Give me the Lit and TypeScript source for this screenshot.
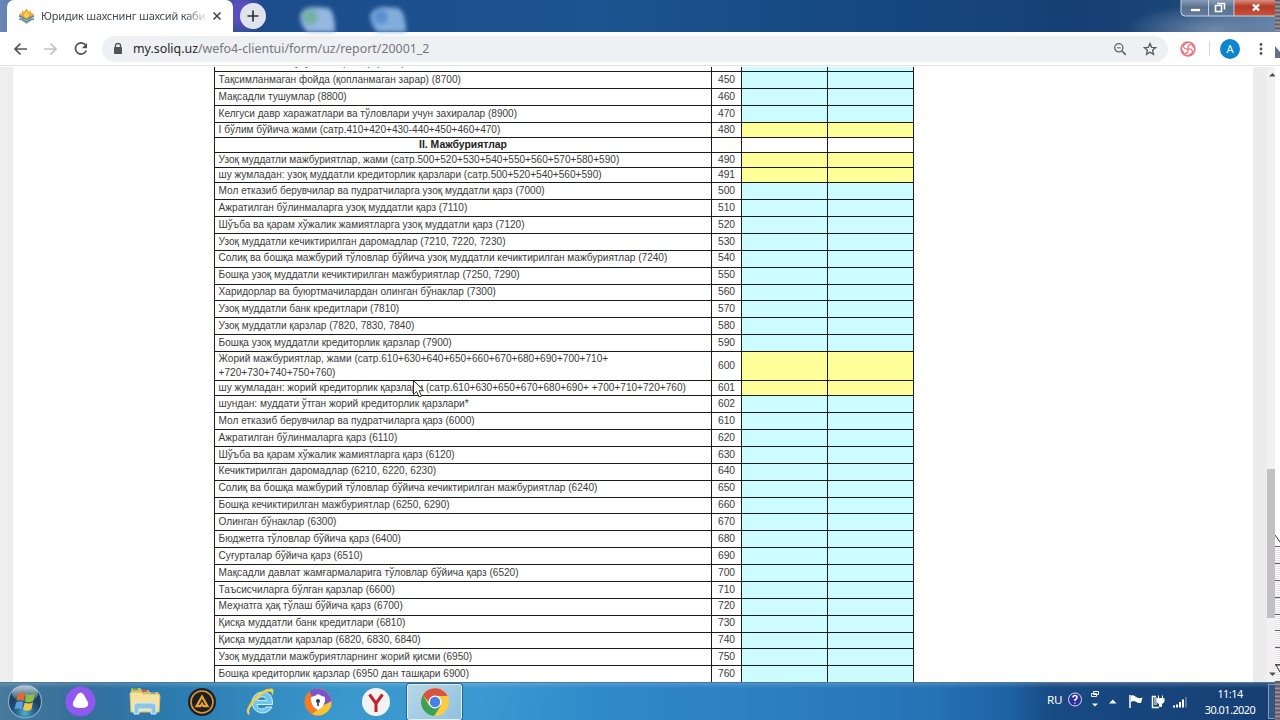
import { LitElement, html, css, svg } from 'lit';
import { customElement } from 'lit/decorators.js';
import { classMap } from 'lit/directives/class-map.js';

type Kind = 'input' | 'total' | 'head' | 'tall';

interface Row {
  text: string;
  code: string;
  kind: Kind;
}

const row = (code: string, text: string, kind: Kind = 'input'): Row => ({ code, text, kind });

const ROWS: Row[] = [
  row('440', 'Сотиб олинган хусусий акциялар (8600)'),
  row('450', 'Тақсимланмаган фойда (қопланмаган зарар) (8700)'),
  row('460', 'Мақсадли тушумлар (8800)'),
  row('470', 'Келгуси давр харажатлари ва тўловлари учун захиралар (8900)'),
  row('480', 'I бўлим бўйича жами (сатр.410+420+430-440+450+460+470)', 'total'),
  row('', 'II. Мажбуриятлар', 'head'),
  row('490', 'Узоқ муддатли мажбуриятлар, жами (сатр.500+520+530+540+550+560+570+580+590)', 'total'),
  row('491', 'шу жумладан: узоқ муддатли кредиторлик қарзлари (сатр.500+520+540+560+590)', 'total'),
  row('500', 'Мол етказиб берувчилар ва пудратчиларга узоқ муддатли қарз (7000)'),
  row('510', 'Ажратилган бўлинмаларга узоқ муддатли қарз (7110)'),
  row('520', 'Шўъба ва қарам хўжалик жамиятларга узоқ муддатли қарз (7120)'),
  row('530', 'Узоқ муддатли кечиктирилган даромадлар (7210, 7220, 7230)'),
  row('540', 'Солиқ ва бошқа мажбурий тўловлар бўйича узоқ муддатли кечиктирилган мажбуриятлар (7240)'),
  row('550', 'Бошқа узоқ муддатли кечиктирилган мажбуриятлар (7250, 7290)'),
  row('560', 'Харидорлар ва буюртмачилардан олинган бўнаклар (7300)'),
  row('570', 'Узоқ муддатли банк кредитлари (7810)'),
  row('580', 'Узоқ муддатли қарзлар (7820, 7830, 7840)'),
  row('590', 'Бошқа узоқ муддатли кредиторлик қарзлар (7900)'),
  row('600', 'Жорий мажбуриятлар, жами (сатр.610+630+640+650+660+670+680+690+700+710+\n+720+730+740+750+760)', 'tall'),
  row('601', 'шу жумладан: жорий кредиторлик қарзлари (сатр.610+630+650+670+680+690+ +700+710+720+760)', 'total'),
  row('602', 'шундан: муддати ўтган жорий кредиторлик қарзлари*'),
  row('610', 'Мол етказиб берувчилар ва пудратчиларга қарз (6000)'),
  row('620', 'Ажратилган бўлинмаларга қарз (6110)'),
  row('630', 'Шўъба ва қарам хўжалик жамиятларга қарз (6120)'),
  row('640', 'Кечиктирилган даромадлар (6210, 6220, 6230)'),
  row('650', 'Солиқ ва бошқа мажбурий тўловлар бўйича кечиктирилган мажбуриятлар (6240)'),
  row('660', 'Бошқа кечиктирилган мажбуриятлар (6250, 6290)'),
  row('670', 'Олинган бўнаклар (6300)'),
  row('680', 'Бюджетга тўловлар бўйича қарз (6400)'),
  row('690', 'Суғурталар бўйича қарз (6510)'),
  row('700', 'Мақсадли давлат жамғармаларига тўловлар бўйича қарз (6520)'),
  row('710', 'Таъсисчиларга бўлган қарзлар (6600)'),
  row('720', 'Меҳнатга ҳақ тўлаш бўйича қарз (6700)'),
  row('730', 'Қисқа муддатли банк кредитлари (6810)'),
  row('740', 'Қисқа муддатли қарзлар (6820, 6830, 6840)'),
  row('750', 'Узоқ муддатли мажбуриятларнинг жорий қисми (6950)'),
  row('760', 'Бошқа кредиторлик қарзлар (6950 дан ташқари 6900)'),
];

@customElement('report-table')
export class ReportTable extends LitElement {
  static styles = css`
    :host {
      display: block;
      width: 700px;
      font: 10.09px/14px 'Liberation Sans', Arial, sans-serif;
      color: #3c3c3c;
    }

    .row {
      display: grid;
      grid-template-columns: 497px 30px 86px 86px;
      height: 16.88px;
      box-sizing: border-box;
      border-top: 1px solid #1c1c1c;
      border-right: 1px solid #1c1c1c;
    }

    .row > div {
      border-left: 1px solid #1c1c1c;
      white-space: pre;
      display: flex;
      align-items: center;
      box-sizing: border-box;
      min-height: 0;
      padding-bottom: 0.6px;
    }

    .row .name { padding-left: 3.6px; }
    .row .code { justify-content: center; font-size: 10.3px; }
    .row.total,
    .row.head { height: 15.07px; }
    .row.tall { height: 29.2px; }
    .row.head .name { justify-content: center; font-size: 10.4px; font-weight: bold; color: #222; padding-left: 0; }
    .cell { background: #ccfcff; }
    .total .cell,
    .tall .cell { background: #ffff99; }
    .head .cell { background: #fff; }
    .end { border-top: 1px solid #1c1c1c; }
  `;

  render() {
    return html`
      ${ROWS.map(
        (r) => html`
          <div class=${classMap({ row: true, [r.kind]: true })}>
            <div class="name">${r.text}</div>
            <div class="code">${r.code}</div>
            <div class="cell"></div>
            <div class="cell"></div>
          </div>
        `
      )}
      <div class="end"></div>
    `;
  }
}

@customElement('browser-top')
export class BrowserTop extends LitElement {
  static styles = css`
    :host {
      display: block;
      height: 67px;
      font-family: 'Noto Sans', 'Open Sans', sans-serif;
      position: relative;
    }

    .strip {
      display: flex;
      height: 32px;
      background:
        radial-gradient(ellipse 24px 26px at 240px 12px, #5a50bd 30%, transparent),
        radial-gradient(ellipse 90px 26px at 1215px 30px, #7189ab, transparent),
        linear-gradient(90deg, #6c87b5 0, #5274af 20px, #1c4c8c 260px, #1b5490 600px, #164880 860px, #153f75 1080px, #1c4778 1190px, #6886ab 1280px);
    }

    .tab {
      display: flex;
      align-items: center;
      width: 226px;
      margin-left: 7px;
      height: 32px;
      background: #fff;
      border-radius: 7px 7px 0 0;
    }

    .logo { margin-left: 11px; }

    .title {
      width: 164px;
      margin-left: 6px;
      white-space: nowrap;
      font-size: 11px;
      line-height: 18px;
      letter-spacing: -0.2px;
      color: #45484c;
      -webkit-mask-image: linear-gradient(90deg, #000 144px, transparent 168px);
      mask-image: linear-gradient(90deg, #000 144px, transparent 168px);
    }

    .cross { margin-left: 7px; }

    .plus {
      width: 26px;
      height: 26px;
      margin: 3px 0 0 7px;
    }

    .ghosts { margin-left: 22px; filter: blur(2px); }

    .bar {
      display: flex;
      align-items: center;
      height: 33px;
      background: #fff;
      border-bottom: 1px solid #e3e3e3;
    }

    .nav { margin-left: 12px; }

    .omni {
      display: flex;
      align-items: center;
      box-sizing: border-box;
      width: 1066px;
      height: 26px;
      margin-left: 8px;
      padding: 0 11px;
      border-radius: 13px;
      background: #eff0f3;
    }

    .url {
      flex: 1;
      margin-left: 10px;
      font-size: 12.4px;
      line-height: 20px;
      color: #75777b;
    }

    .url b { font-weight: normal; color: #27292c; }
    .star { margin-left: 16px; }
    .ext { margin-left: 12px; }
    .sep { width: 1px; height: 15px; background: #d8d8dc; margin-left: 13px; }

    .avatar {
      width: 20px;
      height: 20px;
      margin-left: 10px;
      border-radius: 50%;
      background: #0c84ce;
      color: #fff;
      font-size: 11px;
      line-height: 20px;
      text-align: center;
    }

    .more { margin-left: 19px; }

    .caption {
      position: absolute;
      top: 0;
      right: 4px;
    }
  `;

  render() {
    return html`
      <div class="strip">
        <div class="tab">
          <svg class="logo" width="17" height="16" viewBox="0 0 17 16">
            <path d="M1 8Q1 5 4 5L4 2 6 4 8.500 .5 11 4 13 2 13 5Q16 5 16 8L13 11H4Z" fill="#f2ab35" />
            <circle cx="8.500" cy="7" r="2.500" fill="#f7cf67" />
            <path d="M1 8Q5 9 8.500 12Q12 9 16 8M1 11Q5 11 8.500 14Q12 11 16 11" fill="none" stroke="#5785a8" stroke-width="1.300" />
            <path d="M4 12L8.500 15.500 13 12" fill="none" stroke="#6fa06c" />
          </svg>
          <div class="title">Юридик шахснинг шахсий каби</div>
          <svg class="cross" width="10" height="10" viewBox="0 0 10 10">
            <path d="M1.500 1.500L8.500 8.500M8.500 1.500L1.500 8.500" stroke="#3d4043" stroke-width="1.500" />
          </svg>
        </div>
        <svg class="plus" viewBox="0 0 26 26">
          <circle cx="13" cy="13" r="13" fill="#dfe3ec" />
          <path d="M13 7.500V18.500M7.500 13H18.500" stroke="#2f3236" stroke-width="1.700" />
        </svg>
        <svg class="ghosts" width="130" height="32" viewBox="0 0 130 32">
          <path d="M12 16Q14 7 26 7L40 8Q47 11 47 32H19Q12 24 12 16Z" fill="#95b9e0" />
          <circle cx="22" cy="17" r="8" fill="#75b2a6" />
          <path d="M82 16Q85 7 97 7L110 8Q118 12 118 32H89Q83 24 82 16Z" fill="#82addd" />
          <circle cx="93" cy="17" r="7" fill="#5b8fce" />
        </svg>
      </div>
      <div class="bar">
        <svg class="nav" width="82" height="20" viewBox="0 0 82 20" fill="none" stroke-width="1.700">
          <path d="M15 10H3M8.500 4.500L3 10 8.500 15.500" stroke="#505357" />
          <path d="M32 10H44M38.500 4.500L44 10 38.500 15.500" stroke="#bfc1c4" />
          <path d="M73.500 6A5.600 5.600 0 1 0 74.300 11.500" stroke="#505357" />
          <path d="M75 4V9.200H69.800Z" fill="#505357" />
        </svg>
        <div class="omni">
          <svg width="10" height="14" viewBox="0 0 10 14">
            <path d="M2.500 6V3.500Q2.500 1.500 5 1.500T7.500 3.500V6" fill="none" stroke="#505357" stroke-width="1.300" />
            <rect x="1" y="5" width="8" height="7" rx=".8" fill="#505357" />
          </svg>
          <div class="url"><b>my.soliq.uz</b>/wefo4-clientui/form/uz/report/20001_2</div>
          <svg width="14" height="14" viewBox="0 0 14 14" fill="none" stroke="#606367">
            <circle cx="5.800" cy="5.800" r="4.100" stroke-width="1.300" />
            <path d="M9 9L12.800 12.800" stroke-width="1.700" />
            <path d="M4 5.800H7.600" />
          </svg>
          <svg class="star" width="14" height="14" viewBox="0 0 14 14">
            <path d="M7 1.500L8.600 5.300 12.700 5.600 9.600 8.300 10.500 12.300 7 10.200 3.500 12.300 4.400 8.300 1.300 5.600 5.400 5.300Z" fill="none" stroke="#56595d" stroke-width="1.300" />
          </svg>
        </div>
        <svg class="ext" width="16" height="16" viewBox="0 0 16 16" fill="none" stroke="#e8747c" stroke-width="1.200">
          <circle cx="8" cy="8" r="6.900" stroke-width="1.600" />
          ${[0, 90, 180, 270].map(
            (a) => svg`<path d="M8 8Q7.500 4.500 10 3.500Q13 3.500 13.500 7" transform="rotate(${a} 8 8)" />`
          )}
        </svg>
        <div class="sep"></div>
        <div class="avatar">A</div>
        <svg class="more" width="4" height="14" viewBox="0 0 4 14" fill="#505357">
          <circle cx="2" cy="2.500" r="1.400" />
          <circle cx="2" cy="7" r="1.400" />
          <circle cx="2" cy="11.500" r="1.400" />
        </svg>
      </div>
      <svg class="caption" width="96" height="18" viewBox="0 0 96 18">
        <defs>
          <linearGradient id="grey" x2="0" y2="1">
            <stop offset="0" stop-color="#8b9db7" />
            <stop offset=".45" stop-color="#5a718f" />
            <stop offset="1" stop-color="#647b9c" />
          </linearGradient>
          <linearGradient id="red" x2="0" y2="1">
            <stop offset="0" stop-color="#d98e80" />
            <stop offset=".4" stop-color="#b43b28" />
            <stop offset="1" stop-color="#c8553d" />
          </linearGradient>
        </defs>
        <path d="M1 0V12Q1 16 5 16H54V0Z" fill="url(#grey)" />
        <path d="M54 0H96V16H54Z" fill="url(#red)" />
        <path d="M1 0V12Q1 16 5 16H96M28.500 0V16M54 0V16" fill="none" stroke="#c5d1e0" />
        <rect x="10.500" y="8.500" width="10" height="3.200" fill="#fff" stroke="#4c5a6c" stroke-width=".6" />
        <path d="M37 3.500H44.500V9.500M35.500 5.500H41.500V11.500H35.500Z" fill="none" stroke="#fff" stroke-width="1.600" />
        <path d="M73 4.500L79 10.500M79 4.500L73 10.500" stroke="#fff" stroke-width="2.400" />
      </svg>
    `;
  }
}

@customElement('task-bar')
export class TaskBar extends LitElement {
  static styles = css`
    :host {
      display: flex;
      align-items: center;
      box-sizing: border-box;
      height: 38px;
      border-top: 1px solid #4e7896;
      background:
        linear-gradient(180deg, rgba(255, 255, 255, 0.16), transparent 5px),
        linear-gradient(165deg, transparent 40%, rgba(60, 160, 210, 0.22) 50%, transparent 70%) 100px 0 / 600px 100% no-repeat,
        linear-gradient(90deg, #47799b 0, #356f9b 80px, #2c79ac 160px, #3288bd 250px, #3a97cc 340px, #3c98d1 480px, #3089c9 600px, #2c80c2 760px, #2673b6 930px, #1d62a3 1010px, #184a83 1050px, #153e72 1280px);
      font-family: 'Noto Sans', sans-serif;
      color: #fff;
    }

    svg { display: block; flex: none; }
    .start { margin-left: 7px; }
    .alice { margin-left: 22px; }
    .folder { margin-left: 32px; }
    .aimp { margin-left: 27px; }
    .ie { margin-left: 29px; }
    .avast { margin-left: 29px; }
    .yandex { margin-left: 29px; }

    .active {
      display: flex;
      flex: none;
      align-items: center;
      justify-content: center;
      box-sizing: border-box;
      width: 55px;
      height: 36px;
      margin-left: 16px;
      border: 1px solid #e1f0f8;
      border-radius: 2px;
      background: linear-gradient(135deg, #b9d7e7, #8fc1df);
      outline: 1px solid #27648d;
    }

    .lang {
      width: 15px;
      margin: -5px 0 0 585px;
      font-size: 11.6px;
      letter-spacing: -0.3px;
    }

    .tray { margin-left: 6px; }

    .clock {
      width: 60px;
      margin-left: 10px;
      text-align: center;
      font-size: 10.9px;
      line-height: 16px;
      letter-spacing: -0.53px;
    }

    .peek {
      width: 7px;
      height: 35px;
      margin-left: 8px;
      border: 1px solid #7c9bbd;
      border-right: 0;
      box-sizing: border-box;
      background: #31557f;
    }
  `;

  render() {
    return html`
      <svg class="start" width="36" height="36" viewBox="0 0 36 36">
        <defs>
          <radialGradient id="orb" cy=".85">
            <stop offset="0" stop-color="#4fb0cf" />
            <stop offset=".6" stop-color="#225f88" />
            <stop offset="1" stop-color="#1a4261" />
          </radialGradient>
          <linearGradient id="gloss" x2="0" y2="1">
            <stop offset="0" stop-color="#e5f2f8" stop-opacity=".8" />
            <stop offset="1" stop-color="#bcd8e7" stop-opacity=".12" />
          </linearGradient>
        </defs>
        <circle cx="18" cy="17.500" r="16.500" fill="url(#orb)" stroke="#87aec4" stroke-width="1.200" />
        <ellipse cx="18" cy="9.500" rx="13" ry="8" fill="url(#gloss)" />
        <path d="M11 10Q14.500 7.500 18 9.500L16.500 17Q13 15 9.500 17Z" fill="#e36a2c" />
        <path d="M19.300 10Q23 12 28 9.500L26.300 17Q22 19.300 18 17.500Z" fill="#90be43" />
        <path d="M9.200 18.300Q13 16.300 16.200 18.300L14.700 25.500Q11 23.500 7.500 25.500Z" fill="#569de1" />
        <path d="M17.700 18.700Q22 20.500 26 18.300L24.300 25.500Q20 28 16 25.800Z" fill="#f5c548" />
      </svg>
      <svg class="alice" width="31" height="31" viewBox="0 0 31 31">
        <circle cx="15.500" cy="15.500" r="15" fill="#9058ee" />
        <path d="M15.500 6.500Q17.500 6.500 19 9L23 16.500Q24.500 22 15.500 22T8 16.500L12 9Q13.500 6.500 15.500 6.500Z" fill="#fff" />
      </svg>
      <svg class="folder" width="33" height="31" viewBox="0 0 33 31">
        <path d="M3 4Q3 2 5 2H12L14 4H20L22 6H29Q31 6 31 8V25H3Z" fill="#dcb965" />
        <path d="M5 3H10" stroke="#4ba551" stroke-width="2" />
        <path d="M14 5H19" stroke="#d75e43" stroke-width="2" />
        <path d="M23 7H27" stroke="#4d9bd2" stroke-width="2" />
        <path d="M2 8Q2 6 4 6H13L15 8H30Q32 8 32 10L31 26H3Z" fill="#f4e3a0" stroke="#d8bf74" />
        <path d="M6 28V20Q6 17 9 17H25Q28 17 28 20V28H23V23H11V28Z" fill="#8ec5e5" stroke="#d4edf8" />
      </svg>
      <svg class="aimp" width="28" height="28" viewBox="0 0 28 28">
        <circle cx="14" cy="14" r="13" fill="#1d2023" stroke="#15242e" stroke-width="2" />
        <circle cx="14" cy="14" r="11" fill="none" stroke="#e8932c" stroke-width="1.600" />
        <path d="M8.500 18.200L14 8.500 19.500 18.200H15.500L14 15.500 12.500 18.200Z" fill="none" stroke="#f0a02f" stroke-width="2.200" />
      </svg>
      <svg class="ie" width="30" height="30" viewBox="0 0 30 30">
        <path d="M17 5A10.500 10.500 0 1 0 27 20H21Q19.500 22 16.800 22Q12.500 22 12 17.500H27.500Q28.500 5.500 17 5ZM12.200 13.500Q13 9.500 17 9.500T21.700 13.500Z" fill="#6cc6f0" stroke="#def4fd" stroke-width=".9" />
        <path d="M3.500 28Q-1.500 24 8 12.500T27 1.500Q30.500 3.500 26.500 9.500Q28 4.500 24 4.500Q17 6 9.500 15T5 26Z" fill="#f2ce47" />
      </svg>
      <svg class="avast" width="28" height="28" viewBox="0 0 28 28">
        <circle cx="14" cy="14" r="13.500" fill="#f47b27" />
        <path d="M6 3A14 14 0 0 1 27.500 14L20 21 8 11Z" fill="#7854cf" />
        <path d="M27.500 13A13.500 13.500 0 0 1 8 26L20 17Z" fill="#fac437" />
        <path d="M14 6Q18 8.500 21 9Q22 18 14 22Q6 18 7 9Q11 8.500 14 6Z" fill="#fff" />
        <circle cx="14" cy="13" r="2" fill="#263c63" />
        <path d="M14 13V18" stroke="#263c63" stroke-width="1.600" />
      </svg>
      <svg class="yandex" width="30" height="30" viewBox="0 0 30 30">
        <circle cx="15" cy="15" r="14" fill="#f1f2f3" />
        <path d="M8.500 7.500L15 16.500 21.500 7.500M15 16V25" fill="none" stroke="#c42127" stroke-width="3" />
      </svg>
      <div class="active">
        <svg width="30" height="30" viewBox="0 0 30 30">
          <circle cx="15" cy="15" r="14" fill="#f9cc43" />
          <path d="M2.900 8A14 14 0 0 1 27.500 9H15V15H8.500Z" fill="#d95345" />
          <path d="M2.900 8A14 14 0 0 0 14 29L21 18.500 15 20.500 9 18.500Z" fill="#3a9f58" />
          <circle cx="15" cy="15" r="6.500" fill="#fff" />
          <circle cx="15" cy="15" r="5.200" fill="#4482e8" />
        </svg>
      </div>
      <div class="lang">RU</div>
      <svg class="tray" width="122" height="30" viewBox="0 0 122 30">
        <circle cx="7" cy="12.500" r="6.500" fill="#2d2da4" stroke="#d7dcef" />
        <path d="M5 10.500Q5 8.500 7 8.500T9 10.500Q9 11.500 7 13V14M7 15.500V16.500" fill="none" stroke="#fff" stroke-width="1.600" />
        <path d="M25.500 4.500H30.500V7.500H25.500ZM23.500 6.500H28.500V9.500H23.500Z" fill="#1d4476" stroke="#edf4fb" />
        <path d="M24 16.500H30L27 19.500ZM41 16.500H48.500L44.800 12.500Z" fill="#f1f6fa" />
        <path d="M62 8V21" stroke="#fff" stroke-width="1.500" />
        <path d="M63 8.500Q66 7.500 68 10Q71 12 74.500 10.500L73 16Q70 16.500 67.500 14.500Q65 13.500 63 15Z" fill="#fff" />
        <path d="M88 9.500H84.500V20.500H91" fill="none" stroke="#fff" stroke-width="1.500" />
        <path d="M86 10H89V18H86Z" fill="#8ba5c3" />
        <path d="M89 11.500H96V14.500Q95 16.500 93.500 16.500V19.500H91.500V16.500Q89 16.500 89 14ZM90.500 8.500V11M94.500 8.500V11" fill="#fff" stroke="#fff" />
        <path d="M106 20.500V18.500M109 20.500V17.500M112 20.500V15M115 20.500V12.500" stroke="#fff" stroke-width="2" />
        <path d="M118 20.500V10" stroke="#7189aa" stroke-width="1.500" />
      </svg>
      <div class="clock">11:14<br />30.01.2020</div>
      <div class="peek"></div>
    `;
  }
}

@customElement('app-root')
export class AppRoot extends LitElement {
  static styles = css`
    :host {
      display: block;
      position: relative;
      width: 1280px;
      height: 720px;
      overflow: hidden;
      background: #fff;
    }

    .view {
      display: flex;
      height: 615px;
      overflow: hidden;
    }

    .gutter { width: 13px; background: #eee; }
    .page { width: 1240px; background: #fff; }
    /* scrolled so that only the foot of the first row is left */
    .page report-table { margin: -12.48px 0 0 201px; }
    .gutter.right { width: 14px; background: #ececec; }

    .scroll {
      display: flex;
      flex-direction: column;
      width: 8px;
      background: #f1f1f1;
    }

    .thumb { height: 149px; margin-top: 390px; background: #c1c1c1; }
    .scroll svg { display: block; }
    .top { margin-top: 4px; }
    .bottom { margin-top: 52px; }

    .edge {
      position: absolute;
      left: 1275px;
      width: 5px;
      background: #fff;
    }

    .edge.upper {
      top: 0;
      height: 31px;
      background: repeating-linear-gradient(#765069 0 1px, #6a8a87 1px 2px, #9b8ba8 2px 3px, #7a7b66 3px 4px);
    }

    .edge.lower {
      top: 545px;
      height: 137px;
      background:
        repeating-linear-gradient(transparent 0 1px, #6d596f 1px 2px, transparent 2px 16.88px),
        repeating-linear-gradient(#fff 0 1px, #e9dbe9 1px 2px, #fff 2px 3px, #dbe9df 3px 4px);
    }

    .edge.task {
      top: 682px;
      height: 38px;
      background: repeating-linear-gradient(#784f79 0 1px, #608979 1px 2px, #9b8fae 2px 3px, #846c57 3px 4px);
    }

    .marks { position: absolute; left: 1275px; top: 45px; }
    .marks.mid { top: 534px; }
    .marks.low { top: 664px; }

    .pointer {
      position: absolute;
      left: 412px;
      top: 379px;
    }
  `;

  render() {
    return html`
      <browser-top></browser-top>
      <div class="view">
        <div class="gutter"></div>
        <div class="page"><report-table></report-table></div>
        <div class="gutter right"></div>
        <div class="scroll">
          <svg class="top" width="8" height="8" viewBox="0 0 8 8"><path d="M2 5.500L5.500 2 8 4.500V5.500Z" fill="#505050" /></svg>
          <div class="thumb"></div>
          <svg class="bottom" width="8" height="8" viewBox="0 0 8 8"><path d="M2 2.500L5.500 6 8 3.500V2.500Z" fill="#505050" /></svg>
        </div>
      </div>
      <task-bar></task-bar>
      <div class="edge upper"></div>
      <svg class="marks" width="5" height="14" viewBox="0 0 5 14"><path d="M0 1L5 7V13H0Z" fill="#657184" /></svg>
      <svg class="marks mid" width="5" height="9" viewBox="0 0 5 9"><path d="M0 1L5 8" stroke="#333" /></svg>
      <div class="edge lower"></div>
      <svg class="marks low" width="5" height="9" viewBox="0 0 5 9"><path d="M0 1H5M1 1L5 8" stroke="#333" /></svg>
      <div class="edge task"></div>
      <svg class="pointer" width="13" height="20" viewBox="0 0 13 20">
        <path d="M1.500 1.500V15.500L4.700 12.500 7 18 9.500 17 7.200 11.700H11.500Z" fill="#fff" stroke="#333" />
      </svg>
    `;
  }
}
